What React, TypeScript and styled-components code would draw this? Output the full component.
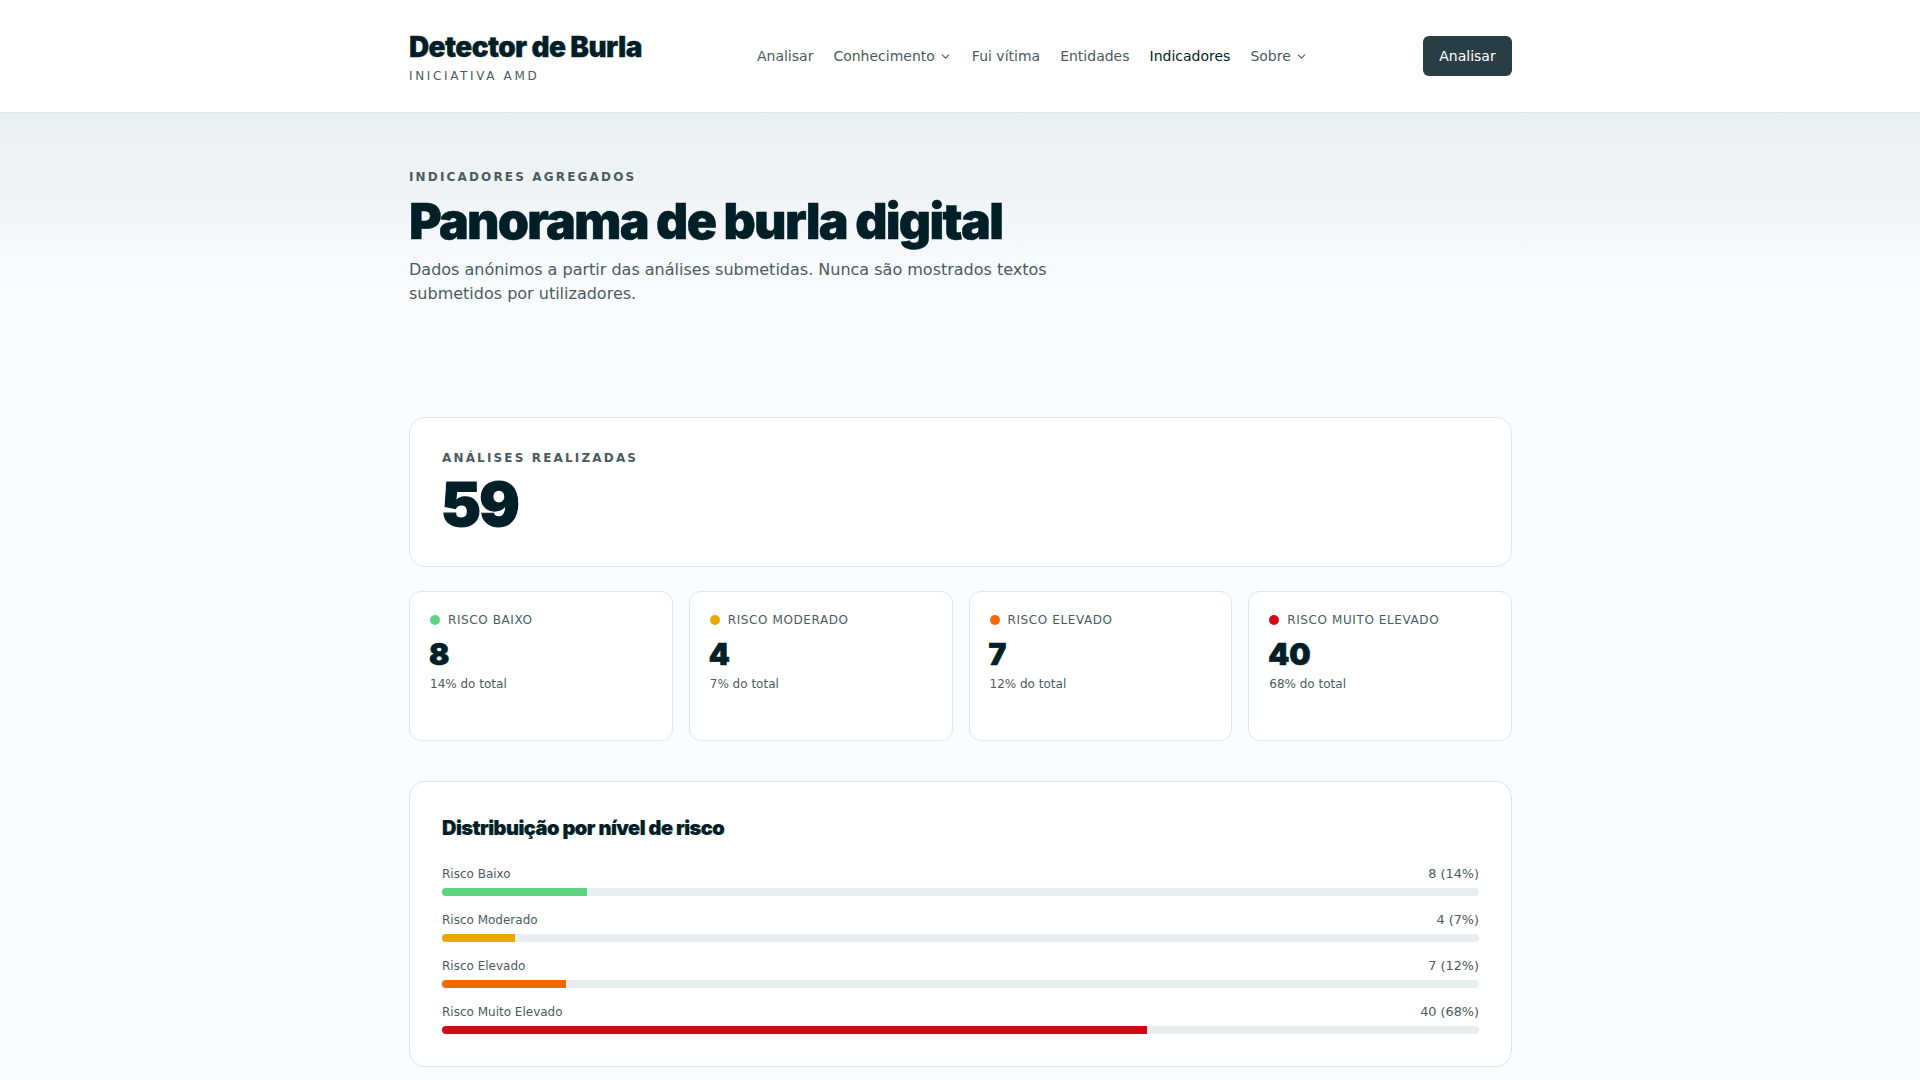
import React from "react";
import styled, { createGlobalStyle } from "styled-components";
import { ChevronDown } from "lucide-react";

const Global = createGlobalStyle`
  html, body { margin: 0; padding: 0; }
  body { background: #fafbfd; font-family: "DejaVu Sans", sans-serif; color: #011f26; }
  * { box-sizing: border-box; }
`;

const display = `"Inter", "Liberation Sans", sans-serif`;

const Header = styled.header`
  background: #fff;
  border-bottom: 1px solid #dde6ea;
`;
const Container = styled.div`
  width: 1152px;
  margin: 0 auto;
  padding: 0 24px 0 25px;
`;
const HeaderRow = styled(Container)`
  height: 112px;
  display: flex;
  align-items: center;
  justify-content: space-between;
`;
const Brand = styled.div`
  display: flex;
  flex-direction: column;
  gap: 4px;
  padding-top: 2px;
`;
const BrandName = styled.span`
  font-family: ${display};
  font-weight: 900;
  font-size: 28px;
  line-height: 34px;
  letter-spacing: -0.022em;
  -webkit-text-stroke: 0.3px #011f26;
  color: #011f26;
`;
const BrandSub = styled.span`
  font-size: 12px;
  line-height: 16px;
  letter-spacing: 0.22em;
  color: #4a5b60;
`;
const Nav = styled.nav`
  display: flex;
  align-items: center;
  gap: 20px;
`;
const NavLink = styled.a<{ $active?: boolean }>`
  display: inline-flex;
  align-items: center;
  gap: 4px;
  font-size: 14px;
  line-height: 20px;
  color: ${(p) => (p.$active ? "#011f26" : "#4a5b60")};
`;
const Cta = styled.button`
  height: 40px;
  width: 89px;
  border: 0;
  border-radius: 6px;
  background: #293e44;
  color: #fff;
  font: 14px "DejaVu Sans", sans-serif;
`;
const Hero = styled.section`
  height: 304px;
  padding-top: 55px;
  background: linear-gradient(to bottom, #e9eef1 0%, #fafbfd 60%);
`;
const Eyebrow = styled.div`
  font-size: 12px;
  line-height: 18px;
  font-weight: 700;
  letter-spacing: 0.18em;
  color: #4a5b60;
`;
const Title = styled.h1`
  margin: 5px 0 0;
  font-family: ${display};
  font-weight: 900;
  font-size: 50px;
  line-height: 60px;
  letter-spacing: -0.034em;
  -webkit-text-stroke: 0.5px #011f26;
  color: #011f26;
`;
const Lead = styled.p`
  margin: 7px 0 0;
  max-width: 672px;
  font-size: 16px;
  line-height: 24px;
  color: #4a5b60;
`;
const Main = styled(Container)`
  display: flex;
  flex-direction: column;
`;
const Card = styled.div`
  background: #fff;
  border: 1px solid #dde6ea;
  border-radius: 16px;
`;
const TotalCard = styled(Card)`
  height: 150px;
  padding: 31px 32px;
`;
const TotalValue = styled.div`
  margin: 4px 0 0 -1px;
  font-family: ${display};
  font-weight: 900;
  font-size: 60px;
  line-height: 66px;
  letter-spacing: -0.03em;
  -webkit-text-stroke: 1.2px #011f26;
  color: #011f26;
`;
const RiskGrid = styled.div`
  margin-top: 24px;
  display: grid;
  grid-template-columns: repeat(4, 1fr);
  gap: 16px;
`;
const RiskCard = styled(Card)`
  height: 150px;
  padding: 20px;
  border-radius: 12px;
`;
const RiskLabel = styled.div`
  display: flex;
  align-items: center;
  gap: 8px;
  font-size: 12px;
  line-height: 16px;
  letter-spacing: 0.05em;
  color: #4a5b60;
`;
const Dot = styled.span<{ $c: string }>`
  width: 10px;
  height: 10px;
  border-radius: 50%;
  background: ${(p) => p.$c};
`;
const RiskValue = styled.div`
  margin: 8px 0 0 -1px;
  font-family: ${display};
  font-weight: 900;
  font-size: 30px;
  line-height: 36px;
  -webkit-text-stroke: 0.7px #011f26;
  color: #011f26;
`;
const RiskSub = styled.div`
  margin-top: 4px;
  font-size: 12px;
  line-height: 16px;
  color: #4a5b60;
`;
const DistCard = styled(Card)`
  margin-top: 40px;
  height: 286px;
  padding: 32px;
`;
const DistTitle = styled.h2`
  margin: 0 0 20px;
  font-family: ${display};
  font-weight: 900;
  font-size: 20px;
  line-height: 28px;
  letter-spacing: -0.026em;
  -webkit-text-stroke: 0.2px #011f26;
  color: #011f26;
`;
const Rows = styled.div`
  display: flex;
  flex-direction: column;
  gap: 12px;
`;
const RowHead = styled.div`
  display: flex;
  justify-content: space-between;
  padding-top: 2px;
  margin-bottom: 4px;
  font-size: 12px;
  line-height: 20px;
  color: #4a5b60;
`;
const RowCount = styled.span`
  font-size: 12.8px;
`;
const Track = styled.div`
  height: 8px;
  border-radius: 4px;
  background: #e9eef1;
  overflow: hidden;
`;
const Fill = styled.div<{ $c: string }>`
  height: 100%;
  background: ${(p) => p.$c};
`;

const risks = [
  { name: "Risco Baixo", n: 8, pct: 14, c: "#5dd47f" },
  { name: "Risco Moderado", n: 4, pct: 7, c: "#e8a800" },
  { name: "Risco Elevado", n: 7, pct: 12, c: "#f46a00" },
  { name: "Risco Muito Elevado", n: 40, pct: 68, c: "#d30814" },
];

export default function App() {
  return (
    <>
      <Global />
      <Header>
        <HeaderRow>
          <Brand>
            <BrandName>Detector de Burla</BrandName>
            <BrandSub>INICIATIVA AMD</BrandSub>
          </Brand>
          <Nav>
            <NavLink>Analisar</NavLink>
            <NavLink>Conhecimento <ChevronDown size={13} /></NavLink>
            <NavLink>Fui vítima</NavLink>
            <NavLink>Entidades</NavLink>
            <NavLink $active>Indicadores</NavLink>
            <NavLink>Sobre <ChevronDown size={13} /></NavLink>
          </Nav>
          <Cta>Analisar</Cta>
        </HeaderRow>
      </Header>
      <Hero>
        <Container>
          <Eyebrow>INDICADORES AGREGADOS</Eyebrow>
          <Title>Panorama de burla digital</Title>
          <Lead>Dados anónimos a partir das análises submetidas. Nunca são mostrados textos submetidos por utilizadores.</Lead>
        </Container>
      </Hero>
      <Main>
        <TotalCard>
          <Eyebrow>ANÁLISES REALIZADAS</Eyebrow>
          <TotalValue>59</TotalValue>
        </TotalCard>
        <RiskGrid>
          {risks.map((r) => (
            <RiskCard key={r.name}>
              <RiskLabel><Dot $c={r.c} />{r.name.toUpperCase()}</RiskLabel>
              <RiskValue>{r.n}</RiskValue>
              <RiskSub>{r.pct}% do total</RiskSub>
            </RiskCard>
          ))}
        </RiskGrid>
        <DistCard>
          <DistTitle>Distribuição por nível de risco</DistTitle>
          <Rows>
            {risks.map((r) => (
              <div key={r.name}>
                <RowHead><span>{r.name}</span><RowCount>{r.n} ({r.pct}%)</RowCount></RowHead>
                <Track><Fill $c={r.c} style={{ width: `${r.pct}%` }} /></Track>
              </div>
            ))}
          </Rows>
        </DistCard>
      </Main>
    </>
  );
}
